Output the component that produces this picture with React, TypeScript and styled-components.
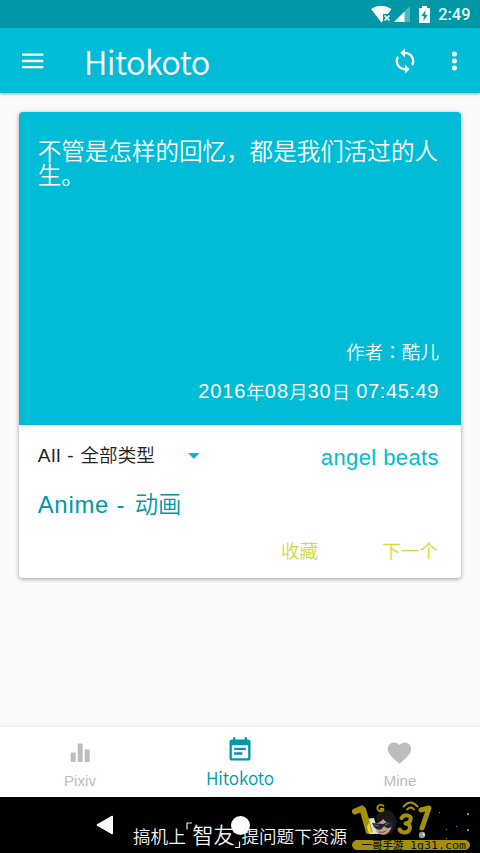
import React from 'react';
import styled, { createGlobalStyle } from 'styled-components';

const GlobalStyle = createGlobalStyle`
  * { box-sizing: border-box; }
  body { margin: 0; background: #fafafa; font-family: "Noto Sans CJK SC", "Noto Sans", sans-serif; font-weight: 350; }
  button { font: inherit; border: 0; padding: 0; background: none; color: inherit; }
  svg { display: block; flex: none; }
`;

const Screen = styled.div`
  width: 480px;
  height: 853px;
  display: flex;
  flex-direction: column;
  overflow: hidden;
  background: #fafafa;
`;

const StatusBar = styled.div`
  height: 28px;
  flex: none;
  display: flex;
  justify-content: flex-end;
  align-items: center;
  padding-right: 9.5px;
  background: #0097a7;
`;

const Clock = styled.span`
  margin-left: 8px;
  padding-top: 1px;
  color: #e8f6f8;
  font: 500 16.4px/28px Roboto, sans-serif;
`;

const AppBar = styled.header`
  height: 65px;
  flex: none;
  display: flex;
  align-items: center;
  padding: 0 16px 0 19px;
  background: #00bcd7;
  color: #fff;
  box-shadow: 0 1px 3px rgba(0, 0, 0, 0.35);
`;

const Title = styled.h1`
  flex: 1;
  margin: 0 0 0 37px;
  font-size: 32.5px;
  line-height: 44px;
  font-weight: 350;
  letter-spacing: -0.6px;
`;

const BarIcon = styled.button<{ $gap?: number }>`
  margin-left: ${(p) => p.$gap ?? 0}px;
`;

const Content = styled.main`
  flex: 1;
  padding: 19px 18.7px 0;
`;

const Card = styled.article`
  width: 442.6px;
  height: 466px;
  display: flex;
  flex-direction: column;
  border-radius: 4px;
  overflow: hidden;
  background: #fff;
  box-shadow: 0 1px 4px rgba(0, 0, 0, 0.38);
`;

const QuotePanel = styled.section`
  height: 313px;
  display: flex;
  flex-direction: column;
  padding: 26px 22.3px 13px 19px;
  background: #00bcd7;
  color: #fff;
`;

const Quote = styled.p`
  flex: 1;
  margin: 0;
  width: 410px;
  font-size: 23.55px;
  line-height: 24px;
`;

const Meta = styled.div`
  display: flex;
  justify-content: flex-end;
  align-items: center;
  font-size: 18.6px;
  line-height: 40px;
  height: 40px;
  padding-bottom: 2px;
  white-space: pre;
`;

const Latin = styled.span<{ $size: number; $spacing?: number }>`
  font-family: "Liberation Sans", Arial, sans-serif;
  font-weight: 400;
  font-size: ${(p) => p.$size}px;
  letter-spacing: ${(p) => p.$spacing ?? 0}px;
  white-space: pre;
`;

const Colon = styled.span`
  font-family: "Noto Sans CJK JP", sans-serif;
`;

const Details = styled.section`
  flex: 1;
  display: flex;
  flex-direction: column;
  padding: 11px 22.3px 0 19px;
`;

const Row = styled.div`
  display: flex;
  align-items: center;
  height: 40px;
`;

const Select = styled.button`
  display: flex;
  align-items: center;
  width: 162px;
  justify-content: space-between;
  font-size: 18.6px;
  line-height: 28px;
  color: #212121;
`;

const SelectLabel = styled.span`
  margin-top: -2px;
`;

const Source = styled.span`
  margin-left: auto;
  padding-top: 4px;
  color: #00bcd7;
`;

const Category = styled.div`
  height: 55px;
  line-height: 54px;
  font-size: 23.4px;
  color: #0097a7;
`;

const Actions = styled.div`
  display: flex;
  justify-content: flex-end;
  gap: 64px;
  padding-right: 1px;
  height: 38px;
  font-size: 18.6px;
  line-height: 38px;
  color: #cddc39;
`;

const BottomNav = styled.nav`
  height: 70px;
  flex: none;
  display: grid;
  grid-template-columns: repeat(3, 1fr);
  background: #fff;
  box-shadow: 0 -1px 5px rgba(0, 0, 0, 0.07);
`;

const NavItem = styled.button<{ $active?: boolean }>`
  display: flex;
  flex-direction: column;
  align-items: center;
  padding-top: ${(p) => (p.$active ? 8.5 : 11.5)}px;
  font-size: 17.2px;
  line-height: 28px;
  letter-spacing: ${(p) => (p.$active ? -0.1 : 0)}px;
  color: ${(p) => (p.$active ? '#0097a7' : '#bdbdbd')};
`;

const SystemBar = styled.footer`
  position: relative;
  height: 56px;
  flex: none;
  display: flex;
  align-items: center;
  padding-left: 95px;
  background: #000;
`;

const HomeDot = styled.span`
  width: 19px;
  height: 19px;
  margin-left: 116.5px;
  border-radius: 50%;
  background: #fff;
`;

const Caption = styled.div`
  position: absolute;
  left: 133px;
  top: 20px;
  display: flex;
  align-items: center;
  height: 36px;
  white-space: nowrap;
  font-size: 17.6px;
  color: #f5f5f5;
`;

const CaptionName = styled.span`
  display: flex;
  align-items: center;
  font-size: 21.3px;
  height: 36px;
  padding-bottom: 3px;
`;

const SiteBadge = styled.div`
  position: absolute;
  left: 350px;
  top: 2px;
`;

const WifiIcon = () => (
  <svg width="21" height="18" viewBox="0 0 21 18">
    <path d="M0 4Q10-2.5 20.5 4L17 9h-5v7l-1.5 1.5Z" fill="#fff" />
    <path d="M13.5 10.5l5 5m0-5-5 5" stroke="#fff" strokeWidth="1.6" />
  </svg>
);

const SignalIcon = () => (
  <svg width="16" height="16" viewBox="0 0 16 16">
    <path d="M16 0v16H0Z" fill="#4db6c1" />
    <path d="M10.5 5.5V16H0Z" fill="#fff" />
  </svg>
);

const BatteryIcon = () => (
  <svg width="11" height="17" viewBox="0 0 11 17">
    <path d="M3 0h5v2h2q1 0 1 1v13q0 1-1 1H1q-1 0-1-1V3q0-1 1-1h2Z" fill="#fff" />
    <path d="M6.6 4 2.4 10h2.5l-.6 5 4.4-6.3H6.1Z" fill="#0097a7" />
  </svg>
);

const MenuIcon = () => (
  <svg width="28" height="28" viewBox="0 0 28 28">
    <path d="M3 7.7h21.3M3 14h21.3M3 20.2h21.3" stroke="#fff" strokeWidth="2.3" />
  </svg>
);

const SyncIcon = () => (
  <svg width="28" height="28" viewBox="0 0 24 24" fill="#fff">
    <path d="M12 4V1L8 5l4 4V6c3.31 0 6 2.69 6 6 0 1.01-.25 1.97-.7 2.8l1.46 1.46C19.54 15.03 20 13.57 20 12c0-4.42-3.58-8-8-8zm0 14c-3.31 0-6-2.69-6-6 0-1.01.25-1.97.7-2.8L5.24 7.74C4.46 8.97 4 10.43 4 12c0 4.42 3.58 8 8 8v3l4-4-4-4v3z" />
  </svg>
);

const MoreIcon = () => (
  <svg width="20" height="28" viewBox="0 0 20 28" fill="#fff">
    <circle cx="10.4" cy="7" r="2.5" />
    <circle cx="10.4" cy="14" r="2.5" />
    <circle cx="10.4" cy="21" r="2.5" />
  </svg>
);

const CaretIcon = () => (
  <svg width="12" height="7" viewBox="0 0 12 7">
    <path d="M0 0h11.500L5.750 6Z" fill="#00bcd7" />
  </svg>
);

const ChartIcon = () => (
  <svg width="28" height="28" viewBox="0 0 28 28" fill="#bdbdbd">
    <path d="M4.700 13.500h5V23h-5zM11.700 4.500h5V23h-5zM18.700 10.500h5V23h-5z" />
  </svg>
);

const NoteIcon = () => (
  <svg width="28" height="28" viewBox="0 0 24 24" fill="#0097a7">
    <path d="M17 10H7v2h10v-2zm2-7h-1V1h-2v2H8V1H6v2H5c-1.11 0-1.99.9-1.99 2L3 19c0 1.1.89 2 2 2h14c1.1 0 2-.9 2-2V5c0-1.1-.9-2-2-2zm0 16H5V8h14v11zm-5-5H7v2h7v-2z" />
  </svg>
);

const HeartIcon = () => (
  <svg width="28" height="28" viewBox="0.500 0 24 24" fill="#bdbdbd">
    <path d="M12 21.35l-1.45-1.32C5.4 15.36 2 12.28 2 8.5 2 5.42 4.42 3 7.5 3c1.74 0 3.41.81 4.5 2.09C13.09 3.81 14.76 3 16.5 3 19.58 3 22 5.42 22 8.5c0 3.78-3.4 6.86-8.55 11.54L12 21.35z" />
  </svg>
);

const BackIcon = () => (
  <svg width="19" height="20" viewBox="0 0 19 20">
    <path d="M2.5 10 17.2 1.5v17Z" fill="#fff" stroke="#fff" strokeWidth="1.6" strokeLinejoin="round" />
  </svg>
);

const CornerOpen = () => (
  <svg width="6.5" height="36" viewBox="0 0 6.5 36" fill="none" stroke="#eee" strokeWidth="1.2">
    <path d="M1 12.5V6h5.5" />
  </svg>
);

const CornerClose = () => (
  <svg width="6.5" height="36" viewBox="0 0 6.5 36" fill="none" stroke="#eee" strokeWidth="1.2">
    <path d="M4.5 24.5v6H-1" />
  </svg>
);

const SiteLogo = () => (
  <svg width="125" height="52" viewBox="0 0 125 52">
    <path d="M15 20l9-1 5 16H19Z" fill="#dfe0c8" />
    <path d="M26 19C27 12 36 8 43 14l4 8-4 11q-6 6-15 1Z" fill="#1a1918" />
    <path d="M23 24q7 1 10-4 4 5 9 4l-1 6q-5 9-14 4Z" fill="#c79b89" />
    <path d="M22 24l11 1 9-4 1 5q-4 6-9 1-4 7-10 1Z" fill="#1b2533" />
    <path d="M24 26l5 1m6-1 4-2" stroke="#647282" strokeWidth="1" />
    <path d="M29 33q4 1 7-1" stroke="#754c45" strokeWidth="1" fill="none" />
    <g fill="none" stroke="#a39109" strokeLinecap="round" strokeLinejoin="round">
      <path d="M5 12.5 12 9.5" strokeWidth="6" />
      <path d="M12.5 9.500 19.500 34" strokeWidth="6.500" strokeLinecap="butt" />
      <path d="M33.5 7c-3-3-7 0-6 3s6 3 6 0h-3" strokeWidth="1.8" />
      <path d="M51.5 19c4-5 11-2 9 2q-1 3-5 3.500 6 1 4 6c-2 4-8 4-10 0" strokeWidth="4" />
      <path d="M53.500 7.500q7-8 14 0M57 10.500q4-4 7 0" strokeWidth="2" />
      <path d="M71 11l8-2-7 20" strokeWidth="5" />
    </g>
    <path d="M17 28l2 7 3-1-3-11Z" fill="#e8d44a" />
    <circle cx="72" cy="36" r="3.2" fill="#999" />
    <path d="M72 36l2-3 1 4Z" fill="#ddd" />
    <path d="M89 13h1v1h-1zM117 14h2v2h-2zM106 27h1v1h-1zM117 30h2v2h-2zM96 30h1v1h-1zM96 39h1v1h-1z" fill="#a39109" />
    <path d="M6 41h110q4 2 4 5t-4 5H6q-4-2-4-5t4-5Z" fill="#a39109" />
    <g fill="#15130a" fontSize="10.5" fontWeight="500">
      <text x="11.5" y="49.8" fontFamily="'Noto Sans CJK SC', sans-serif" textLength="42">一哥手游</text>
      <text x="60" y="49.5" fontFamily="'DejaVu Sans Mono', monospace" fontWeight="400" fontSize="11" textLength="56" lengthAdjust="spacingAndGlyphs">1g31.com</text>
    </g>
  </svg>
);

const StatusIcons = styled.div`
  display: flex;
  align-items: center;
`;

const Spaced = styled.span<{ $left: number }>`
  margin-left: ${(p) => p.$left}px;
`;

export default function App() {
  return (
    <Screen>
      <GlobalStyle />
      <StatusBar>
        <StatusIcons>
          <WifiIcon />
          <Spaced $left={2}><SignalIcon /></Spaced>
          <Spaced $left={9}><BatteryIcon /></Spaced>
        </StatusIcons>
        <Clock>2:49</Clock>
      </StatusBar>
      <AppBar>
        <BarIcon aria-label="Menu"><MenuIcon /></BarIcon>
        <Title>Hitokoto</Title>
        <BarIcon aria-label="Refresh"><SyncIcon /></BarIcon>
        <BarIcon aria-label="More" $gap={25}><MoreIcon /></BarIcon>
      </AppBar>
      <Content>
        <Card>
          <QuotePanel>
            <Quote>不管是怎样的回忆，都是我们活过的人生。</Quote>
            <Meta>作者<Colon>：</Colon>酷儿</Meta>
            <Meta>
              <Latin $size={20} $spacing={0.9}>2016</Latin>年
              <Latin $size={20} $spacing={0.9}>08</Latin>月
              <Latin $size={20} $spacing={0.9}>30</Latin>日
              <Latin $size={20} $spacing={0.6}> 07:45:49</Latin>
            </Meta>
          </QuotePanel>
          <Details>
            <Row>
              <Select>
                <SelectLabel><Latin $size={19} $spacing={0.8}>All - </Latin>全部类型</SelectLabel>
                <CaretIcon />
              </Select>
              <Source><Latin $size={22} $spacing={0.4}>angel beats</Latin></Source>
            </Row>
            <Category><Latin $size={23.8} $spacing={0.8}>Anime </Latin><Latin $size={23.8} $spacing={1.8}>- </Latin>动画</Category>
            <Actions>
              <button>收藏</button>
              <button>下一个</button>
            </Actions>
          </Details>
        </Card>
      </Content>
      <BottomNav>
        <NavItem><ChartIcon /><Latin $size={15.2}>Pixiv</Latin></NavItem>
        <NavItem $active><NoteIcon />Hitokoto</NavItem>
        <NavItem><HeartIcon /><Latin $size={15.2}>Mine</Latin></NavItem>
      </BottomNav>
      <SystemBar>
        <BackIcon />
        <Caption>
          搞机上
          <CornerOpen />
          <CaptionName>智友</CaptionName>
          <CornerClose />
          提问题下资源
        </Caption>
        <HomeDot />
        <SiteBadge><SiteLogo /></SiteBadge>
      </SystemBar>
    </Screen>
  );
}
